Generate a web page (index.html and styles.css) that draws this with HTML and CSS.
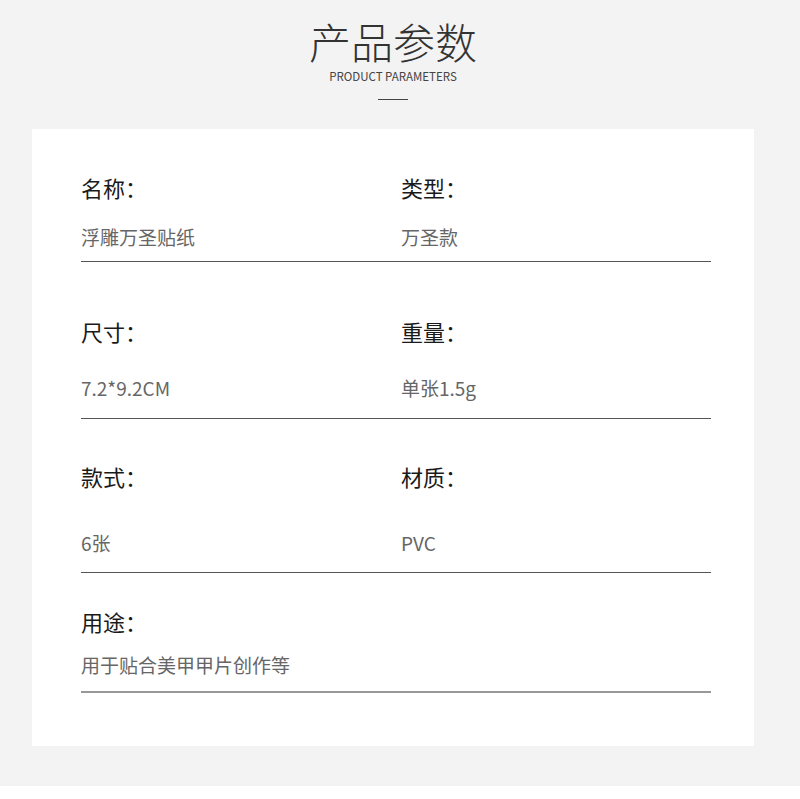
FILE: index.html
```html
<!DOCTYPE html>
<html lang="zh-CN">
<head>
    <meta charset="UTF-8">
    <meta name="viewport" content="width=device-width, initial-scale=1.0">
    <title>产品参数</title>
    <link rel="stylesheet" href="styles.css">
</head>
<body>
    <div class="page">
        <div class="header">
            <h1 class="title">产品参数</h1>
            <p class="subtitle">PRODUCT PARAMETERS</p>
            <div class="title-line"></div>
        </div>

        <div class="card">
            <div class="row row-1">
                <div class="cell">
                    <div class="label">名称：</div>
                    <div class="value">浮雕万圣贴纸</div>
                </div>
                <div class="cell">
                    <div class="label">类型：</div>
                    <div class="value">万圣款</div>
                </div>
            </div>

            <div class="row row-2">
                <div class="cell">
                    <div class="label">尺寸：</div>
                    <div class="value">7.2*9.2CM</div>
                </div>
                <div class="cell">
                    <div class="label">重量：</div>
                    <div class="value">单张1.5g</div>
                </div>
            </div>

            <div class="row row-3">
                <div class="cell">
                    <div class="label">款式：</div>
                    <div class="value">6张</div>
                </div>
                <div class="cell">
                    <div class="label">材质：</div>
                    <div class="value">PVC</div>
                </div>
            </div>

            <!-- last row spans the full width -->
            <div class="row row-4">
                <div class="cell">
                    <div class="label">用途：</div>
                    <div class="value">用于贴合美甲甲片创作等</div>
                </div>
            </div>
        </div>
    </div>
</body>
</html>
```

FILE: styles.css
```css
body {
    margin: 0;
    background-color: #fff;
    font-family: "Noto Sans CJK SC", "Noto Sans", sans-serif;
}
.page {
    height: 786px;
    padding: 0 46px 0 32px;
    background-color: #f3f3f3;
    box-sizing: border-box;
}

/* Header */
.header {
    display: flex;
    flex-direction: column;
    align-items: center;
    padding-top: 20px;
    height: 129px;
    box-sizing: border-box;
}
.title {
    margin: 0;
    font-size: 42px;
    line-height: 42px;
    font-weight: 300;
    color: #333;
}
.subtitle {
    margin: 6px 0 0;
    font-size: 11.5px;
    line-height: 16px;
    color: #444;
}
.title-line {
    width: 30px;
    height: 1px;
    margin-top: 15px;
    background-color: #444;
}

/* Card */
.card {
    height: 617px;
    background-color: #fff;
    padding: 0 43px 0 49px;
    box-sizing: border-box;
}
.row {
    display: grid;
    grid-template-columns: 320px 1fr;
    border-bottom: 1px solid #555;
}
.label {
    font-size: 22px;
    line-height: 30px;
    color: #1a1a1a;
}
.value {
    font-size: 19px;
    line-height: 30px;
    color: #666;
}

.row-1 { padding: 43px 0 9px; }
.row-1 .value { margin-top: 20px; }

.row-2 { padding: 54px 0 15px; }
.row-2 .value { margin-top: 27px; }

.row-3 { padding: 42px 0 14px; }
.row-3 .value { margin-top: 37px; }

.row-4 {
    padding: 33px 0 11px;
    border-bottom: 2px solid #999;
}
.row-4 .value { margin-top: 14px; }
```
